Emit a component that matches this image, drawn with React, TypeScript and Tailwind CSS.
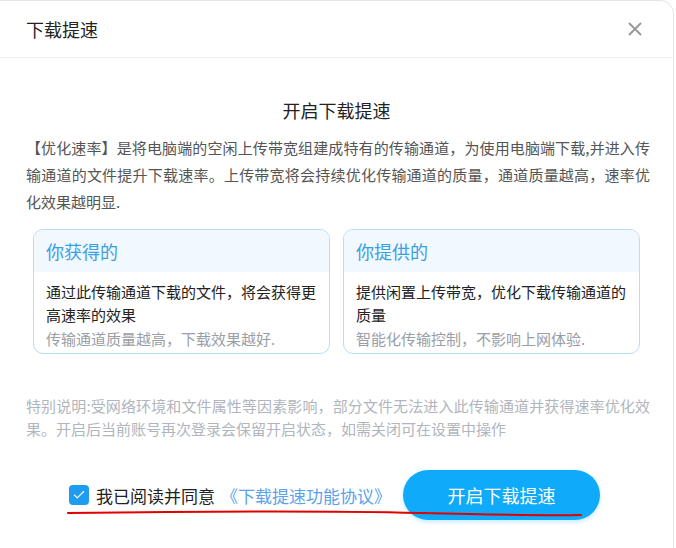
import { Check } from 'lucide-react';

const font = { fontFamily: '"Noto Sans CJK SC", "Microsoft YaHei", sans-serif' };

export default function App() {
  return (
    <div className="w-[676px] h-[548px] bg-white overflow-hidden" style={font}>
      <div className="relative w-[674px] h-[560px] bg-white rounded-tr-[14px] border-r border-t border-[#e6e6e6] flex flex-col">
        {/* Header */}
        <div className="h-[57px] shrink-0 flex items-center justify-between pl-[26px] pr-[30px] border-b border-[#efefef]">
          <span className="text-[18px] text-[#222] leading-none">下载提速</span>
          <svg width="16" height="16" viewBox="0 0 16 16" className="text-[#999]">
            <path d="M2 2 L14 14 M14 2 L2 14" stroke="currentColor" strokeWidth="2" fill="none" />
          </svg>
        </div>

        {/* Body */}
        <div className="px-[26px] pt-[40px]">
          <h2 className="text-center text-[18px] text-[#222] leading-[24px]">开启下载提速</h2>
          <p className="mt-[12px] w-[624px] text-[15px] leading-[27px] text-[#555] text-justify">
            【优化速率】是将电脑端的空闲上传带宽组建成特有的传输通道，为使用电脑端下载,并进入传输通道的文件提升下载速率。上传带宽将会持续优化传输通道的质量，通道质量越高，速率优化效果越明显.
          </p>

          <div className="mt-[14px] px-[7px] grid grid-cols-2 gap-[13px]">
            <Card
              title="你获得的"
              lines="通过此传输通道下载的文件，将会获得更高速率的效果"
              hint="传输通道质量越高，下载效果越好."
            />
            <Card
              title="你提供的"
              lines="提供闲置上传带宽，优化下载传输通道的质量"
              hint="智能化传输控制，不影响上网体验."
            />
          </div>

          <p className="mt-[40px] w-[624px] text-[15px] leading-[23px] text-[#b1b5bd] text-justify">
            特别说明:受网络环境和文件属性等因素影响，部分文件无法进入此传输通道并获得速率优化效果。开启后当前账号再次登录会保留开启状态，如需关闭可在设置中操作
          </p>

          <div className="mt-[30px] pl-[43px] flex items-center">
            <span className="w-[20px] h-[20px] rounded-[4px] bg-[#1e9cf0] flex items-center justify-center">
              <Check size={14} strokeWidth={2} className="text-white" />
            </span>
            <span className="ml-[7px] text-[17px] text-[#222] leading-none">我已阅读并同意</span>
            <span className="ml-[6px] text-[17px] text-[#5aa2ea] leading-none">《下载提速功能协议》</span>
            <button className="ml-[12px] w-[197px] h-[50px] rounded-full bg-[#0faaf9] text-white text-[18px] shadow-[0_2px_4px_rgba(15,170,249,0.25)]">
              开启下载提速
            </button>
          </div>
        </div>

        {/* hand-drawn red underline annotation */}
        <svg className="absolute left-0 top-0 pointer-events-none" width="676" height="548">
          <path d="M68 512 Q 300 509 420 512 T 581 514" stroke="#e00000" strokeWidth="2" fill="none" strokeLinecap="round" />
        </svg>
      </div>
    </div>
  );
}

function Card({ title, lines, hint }: { title: string; lines: string; hint: string }) {
  return (
    <div className="rounded-[10px] border border-[#b7ddf3] overflow-hidden">
      <div className="h-[42px] bg-[#f1f8fe] flex items-center px-[12px]">
        <span className="text-[18px] text-[#3aa0e4] leading-none">{title}</span>
      </div>
      <div className="px-[12px] pt-[8px] text-[15px]">
        <p className="text-[#222] leading-[23px]">{lines}</p>
        <p className="text-[#9a9ea6] leading-[25px] pb-[2px]">{hint}</p>
      </div>
    </div>
  );
}
